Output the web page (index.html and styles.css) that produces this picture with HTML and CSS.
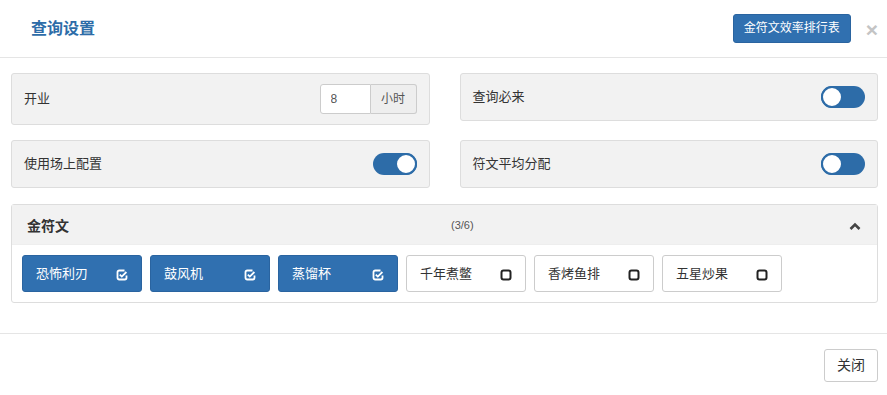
FILE: index.html
```html
<!DOCTYPE html>
<html lang="zh-CN">
<head>
  <meta charset="UTF-8">
  <meta name="viewport" content="width=device-width, initial-scale=1.0">
  <title>查询设置</title>
  <link rel="stylesheet" href="styles.css">
</head>
<body>
  <div class="modal">
    <div class="modal-header">
      <h4 class="modal-title">查询设置</h4>
      <button class="btn btn-primary btn-sm">金符文效率排行表</button>
      <span class="close">&times;</span>
    </div>

    <div class="modal-body">
      <div class="settings">
        <div class="setting">
          <span>开业</span>
          <div class="input-group">
            <input type="text" value="8">
            <span class="addon">小时</span>
          </div>
        </div>
        <div class="setting">
          <span>查询必来</span>
          <span class="switch"><span class="knob"></span></span>
        </div>
        <div class="setting">
          <span>使用场上配置</span>
          <span class="switch on"><span class="knob"></span></span>
        </div>
        <div class="setting">
          <span>符文平均分配</span>
          <span class="switch"><span class="knob"></span></span>
        </div>
      </div>

      <!-- rune panel -->
      <div class="panel">
        <div class="panel-heading">
          <span class="panel-title">金符文</span>
          <div class="panel-right">
            <span class="count">(3/6)</span>
            <svg class="chevron" width="12" height="8" viewBox="0 0 12 8"><polyline points="1.5,7 6,2.5 10.5,7" fill="none" stroke="#444" stroke-width="2.6"/></svg>
          </div>
        </div>
        <div class="panel-body" id="runeList"></div>
      </div>
    </div>

    <div class="modal-footer">
      <button class="btn btn-default">关闭</button>
    </div>
  </div>

  <script>
    const runes = [
      { name: "恐怖利刃", checked: true },
      { name: "鼓风机", checked: true },
      { name: "蒸馏杯", checked: true },
      { name: "千年煮鳖", checked: false },
      { name: "香烤鱼排", checked: false },
      { name: "五星炒果", checked: false }
    ];

    const checkedIcon = `<svg width="12" height="12" viewBox="0 0 12 12"><path d="M8.5 1.5H3.2a1.7 1.7 0 0 0-1.7 1.7v5.6a1.7 1.7 0 0 0 1.7 1.7h5.6a1.7 1.7 0 0 0 1.7-1.7V6.5" fill="none" stroke="#fff" stroke-width="1.8"/><path d="M3.8 5.6l2 2 4.6-4.6" fill="none" stroke="#fff" stroke-width="1.8"/></svg>`;
    const emptyIcon = `<svg width="12" height="12" viewBox="0 0 12 12"><rect x="1.5" y="1.5" width="9" height="9" rx="2" fill="none" stroke="#222" stroke-width="2"/></svg>`;

    function renderRunes() {
      const list = document.getElementById("runeList");
      list.innerHTML = '';
      runes.forEach(r => {
        const div = document.createElement("div");
        div.className = "rune" + (r.checked ? " active" : "");
        div.innerHTML = `<span>${r.name}</span>${r.checked ? checkedIcon : emptyIcon}`;
        div.onclick = () => { r.checked = !r.checked; renderRunes(); };
        list.appendChild(div);
      });
    }

    document.querySelectorAll(".switch").forEach(s => {
      s.onclick = () => s.classList.toggle("on");
    });

    renderRunes();
  </script>
</body>
</html>
```

FILE: styles.css
```css
* {
  margin: 0;
  padding: 0;
  box-sizing: border-box;
}
body {
  font-family: "Liberation Sans", "Noto Sans CJK SC", sans-serif;
  font-size: 13px;
  color: #333;
  background: #fff;
}
.modal {
  width: 887px;
}
.modal-header {
  height: 58px;
  display: flex;
  align-items: center;
  padding: 0 9px 0 31px;
  border-bottom: 1px solid #e5e5e5;
}
.modal-title {
  flex: 1;
  font-size: 16px;
  font-weight: bold;
  color: #2d6ca8;
  line-height: 20px;
}
.close {
  font-size: 21px;
  font-weight: bold;
  color: #c4c4c4;
  line-height: 1;
  margin-left: 15px;
  margin-top: 1px;
  cursor: pointer;
}
.btn {
  font-family: inherit;
  border: 1px solid transparent;
  border-radius: 3px;
  cursor: pointer;
}
.btn-primary {
  background: #3070b0;
  border-color: #2a64a0;
  color: #fff;
}
.btn-sm {
  font-size: 12px;
  line-height: 17px;
  padding: 5px 10px;
}
.btn-default {
  background: #fff;
  border-color: #ccc;
  color: #333;
  font-size: 14px;
  line-height: 19px;
  padding: 6px 12px;
}
.modal-body {
  padding: 15px 9px 30px 11px;
}
.settings {
  display: grid;
  grid-template-columns: 1fr 1fr;
  column-gap: 30px;
  row-gap: 15px;
  align-items: start;
}
.setting {
  display: flex;
  align-items: center;
  justify-content: space-between;
  background: #f2f2f2;
  border: 1px solid #ddd;
  border-radius: 3px;
  padding: 10px 12px;
  line-height: 20px;
}
.input-group {
  display: flex;
  height: 30px;
}
.input-group input {
  width: 51px;
  border: 1px solid #ccc;
  border-radius: 3px 0 0 3px;
  padding: 0 10px;
  font-family: inherit;
  font-size: 12px;
  color: #555;
  outline: none;
}
.input-group .addon {
  width: 46px;
  display: flex;
  align-items: center;
  justify-content: center;
  background: #eee;
  border: 1px solid #ccc;
  border-left: none;
  border-radius: 0 3px 3px 0;
  font-size: 12px;
  color: #555;
}
.switch {
  display: flex;
  justify-content: flex-start;
  width: 44px;
  height: 22px;
  margin: 2px 0;
  border-radius: 11px;
  background: #2d6ca8;
  cursor: pointer;
}
.switch.on {
  justify-content: flex-end;
}
.knob {
  width: 22px;
  height: 22px;
  border-radius: 50%;
  background: #fff;
  border: 2px solid #2d6ca8;
}
.panel {
  margin-top: 16px;
  border: 1px solid #ddd;
  border-radius: 3px;
}
.panel-heading {
  display: grid;
  grid-template-columns: 1fr 1fr;
  align-items: center;
  height: 40px;
  padding: 0 16px 0 15px;
  background: #f2f2f2;
  border-bottom: 1px solid #eee;
}
.panel-title {
  font-size: 14px;
  font-weight: bold;
  line-height: 20px;
  margin-top: 3px;
}
.panel-right {
  display: flex;
  align-items: center;
  justify-content: space-between;
  padding-left: 7px;
}
.count {
  font-size: 11px;
  color: #555;
}
.chevron {
  margin-top: 3px;
}
.panel-body {
  display: flex;
  gap: 8px;
  padding: 10px;
}
.rune {
  width: 120px;
  height: 37px;
  display: flex;
  align-items: center;
  justify-content: space-between;
  padding: 0 13px;
  border: 1px solid #ccc;
  border-radius: 3px;
  background: #fff;
  color: #333;
  font-size: 13px;
  cursor: pointer;
}
.rune span {
  margin-top: -3px;
}
.rune svg {
  margin-top: 2px;
}
.rune.active {
  background: #3070b0;
  border-color: #2a64a0;
  color: #fff;
}
.modal-footer {
  display: flex;
  justify-content: flex-end;
  padding: 15px 9px 15px;
  border-top: 1px solid #e5e5e5;
}
```
